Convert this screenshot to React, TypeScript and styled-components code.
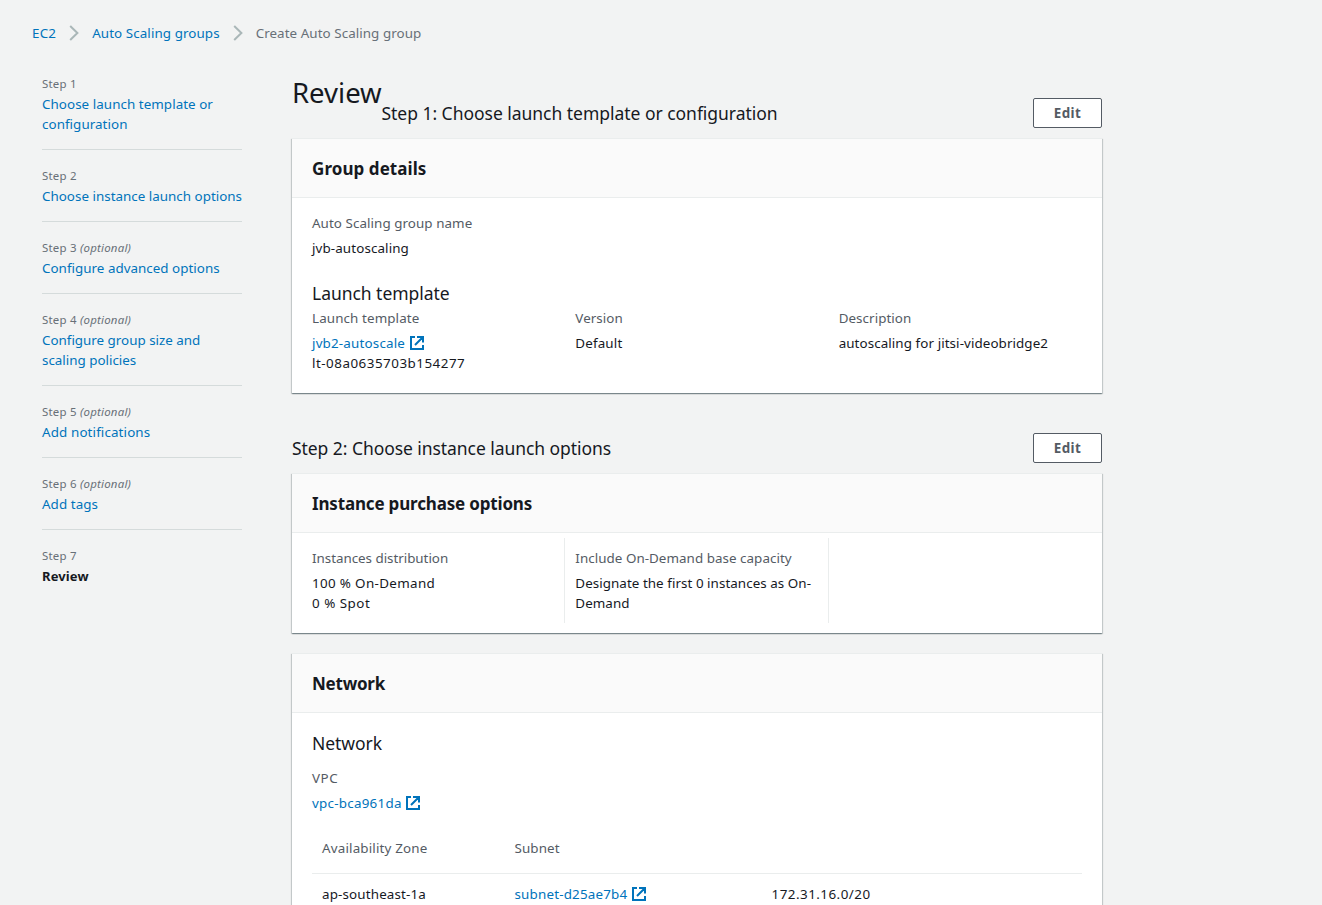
import React from 'react';
import styled, { createGlobalStyle, css } from 'styled-components';

const color = {
  page: '#f2f3f3',
  text: '#16191f',
  label: '#545b64',
  muted: '#687078',
  link: '#0073bb',
  line: '#eaeded',
  divider: '#d5dbdb',
};

const GlobalStyle = createGlobalStyle`
  * { box-sizing: border-box; }
  html, body { margin: 0; height: 100%; overflow: hidden; }
  body {
    background: ${color.page};
    color: ${color.text};
    font: 13.4px/20px "Noto Sans", "Open Sans", sans-serif;
    letter-spacing: 0.06px;
  }
  h1, h2, h3, h4, p { margin: 0; font-weight: 400; }
  a { color: ${color.link}; text-decoration: none; }
`;

type Tracked = { $track?: number };
const tracking = css<Tracked>`
  ${({ $track }) => $track !== undefined && `letter-spacing: ${$track}px;`}
`;

const Page = styled.div`
  height: 905px;
  overflow: hidden;
  padding: 23px 0 0 32px;
`;

const Breadcrumbs = styled.nav`
  display: flex;
  align-items: center;
  height: 20px;
`;

const Crumb = styled.a<Tracked>`
  white-space: nowrap;
  ${tracking}
`;

const CurrentCrumb = styled.span`
  color: ${color.muted};
  white-space: nowrap;
`;

const Chevron = styled.svg`
  width: 10px;
  height: 16px;
  margin: 0 13px;
  fill: none;
  stroke: #aab7b8;
  stroke-width: 2;
`;

const Columns = styled.div`
  display: flex;
  align-items: flex-start;
  padding: 31px 0 0 10px;
`;

const Steps = styled.ol`
  width: 200px;
  margin: 0 50px 0 0;
  padding: 0;
  list-style: none;
`;

const Step = styled.li`
  padding-bottom: 15px;
  margin-bottom: 16px;
  border-bottom: 1px solid ${color.divider};
  white-space: nowrap;

  &:last-child { border-bottom: 0; }
`;

const StepLabel = styled.div`
  color: ${color.muted};
  font-size: 11.45px;
  letter-spacing: 0.22px;
`;

const StepLink = styled.a<Tracked>`
  display: block;
  ${tracking}
`;

const StepCurrent = styled.div`
  font-size: 13px;
  font-weight: 700;
  letter-spacing: 0.13px;
`;

const Main = styled.main`
  width: 810px;
`;

const TitleRow = styled.div`
  display: flex;
  align-items: flex-start;
`;

const Title = styled.h1`
  width: 89.5px;
  font-size: 27.5px;
  line-height: 38px;
  letter-spacing: 0;
`;

const SectionHeader = styled.div<{ $first?: boolean }>`
  display: flex;
  flex: 1;
  align-items: center;
  justify-content: space-between;
  height: 30px;
  margin-top: ${({ $first }) => ($first ? 24 : 40)}px;
`;

const SectionTitle = styled.h2<Tracked>`
  font-size: 17.5px;
  line-height: 22px;
  white-space: nowrap;
  ${tracking}
`;

const EditButton = styled.button`
  width: 69px;
  height: 30px;
  padding: 0;
  border: 1px solid ${color.label};
  border-radius: 2px;
  background: #fff;
  color: ${color.label};
  font: inherit;
  font-size: 13.4px;
  font-weight: 700;
  letter-spacing: 0.45px;
`;

const Panel = styled.section<{ $gap?: number }>`
  margin-top: ${({ $gap = 10 }) => $gap}px;
  border-top: 1px solid ${color.line};
  background: #fff;
  box-shadow:
    0 1px 1px 0 rgba(0, 28, 36, 0.3),
    1px 1px 1px 0 rgba(0, 28, 36, 0.15),
    -1px 1px 1px 0 rgba(0, 28, 36, 0.15);
`;

const PanelHeader = styled.header`
  height: 59px;
  padding: 19px 20px 17px;
  border-bottom: 1px solid ${color.line};
  background: #fafafa;
`;

const PanelTitle = styled.h3<Tracked>`
  font-size: 17px;
  font-weight: 700;
  line-height: 22px;
  ${tracking}
`;

const PanelBody = styled.div`
  padding: 15px 20px 20px;
`;

const SubTitle = styled.h4<Tracked & { $top: number; $bottom: number }>`
  margin: ${({ $top, $bottom }) => `${$top}px 0 ${$bottom}px`};
  font-size: 17.5px;
  line-height: 20px;
  ${tracking}
`;

const Label = styled.div<Tracked>`
  margin-bottom: 5px;
  color: ${color.label};
  ${tracking}
`;

const Value = styled.div<Tracked>`
  ${tracking}
`;

const FieldGrid = styled.div`
  display: grid;
  grid-template-columns: repeat(3, 1fr);
  margin: 0 -10px;
`;

const Field = styled.div`
  padding: 0 10px;
`;

const RuledGrid = styled(FieldGrid)`
  margin: -10px -10px -10px;
`;

const RuledField = styled.div`
  height: 85px;
  padding: 10px 10px 0;

  &:not(:last-child) { border-right: 1px solid ${color.line}; }
`;

const IconLink = styled.a<Tracked>`
  display: inline-flex;
  align-items: center;
  gap: 3.6px;
  height: 20px;
  vertical-align: top;
  ${tracking}
`;

const LinkIcon = styled.svg`
  width: 16px;
  height: 16px;
  fill: none;
  stroke: ${color.link};
  stroke-width: 2;
`;

const SubnetTable = styled.div`
  margin-top: 15px;
`;

const TableRow = styled.div<{ $head?: boolean }>`
  display: grid;
  grid-template-columns: 192.5px 257px 1fr;
  padding: ${({ $head }) => ($head ? '10px 10px 15px' : '10px 10px')};
  border-bottom: 1px solid ${color.line};
  color: ${({ $head }) => ($head ? color.label : color.text)};
`;

const HeadCell = styled.span<Tracked>`
  ${tracking}
`;

function Separator() {
  return (
    <Chevron viewBox="0 0 10 16" aria-hidden="true">
      <path d="M1.2 1L8.4 8L1.2 15" />
    </Chevron>
  );
}

function ExternalLink({ text, track }: { text: string; track: number }) {
  return (
    <IconLink href="#" $track={track}>
      {text}
      <LinkIcon viewBox="0 0 16 16" aria-hidden="true">
        <path d="M6 2H2V14H14V10M8 2H14V7.5M6 10L14 2" />
      </LinkIcon>
    </IconLink>
  );
}

const steps: { lines: string[]; optional?: boolean; track?: number }[] = [
  { lines: ['Choose launch template or', 'configuration'], track: 0.05 },
  { lines: ['Choose instance launch options'], track: 0.01 },
  { lines: ['Configure advanced options'], optional: true, track: 0.02 },
  { lines: ['Configure group size and', 'scaling policies'], optional: true, track: -0.01 },
  { lines: ['Add notifications'], optional: true, track: 0.12 },
  { lines: ['Add tags'], optional: true },
];

export default function App() {
  return (
    <>
      <GlobalStyle />
      <Page>
        <Breadcrumbs>
          <Crumb href="#" $track={0.2}>EC2</Crumb>
          <Separator />
          <Crumb href="#" $track={0.08}>Auto Scaling groups</Crumb>
          <Separator />
          <CurrentCrumb>Create Auto Scaling group</CurrentCrumb>
        </Breadcrumbs>
        <Columns>
          <Steps>
            {steps.map((step, i) => (
              <Step key={i}>
                <StepLabel>
                  Step {i + 1} {step.optional && <em>(optional)</em>}
                </StepLabel>
                {step.lines.map((line) => (
                  <StepLink key={line} href="#" $track={step.track}>{line}</StepLink>
                ))}
              </Step>
            ))}
            <Step>
              <StepLabel>Step 7</StepLabel>
              <StepCurrent>Review</StepCurrent>
            </Step>
          </Steps>
          <Main>
            <TitleRow>
              <Title>Review</Title>
              <SectionHeader $first>
                <SectionTitle $track={-0.03}>Step 1: Choose launch template or configuration</SectionTitle>
                <EditButton>Edit</EditButton>
              </SectionHeader>
            </TitleRow>
            <Panel>
              <PanelHeader><PanelTitle $track={0.07}>Group details</PanelTitle></PanelHeader>
              <PanelBody>
                <Label>Auto Scaling group name</Label>
                <Value $track={0.11}>jvb-autoscaling</Value>
                <SubTitle $top={25} $bottom={5} $track={-0.04}>Launch template</SubTitle>
                <FieldGrid>
                  <Field>
                    <Label $track={0.11}>Launch template</Label>
                    <ExternalLink text="jvb2-autoscale" track={0.18} />
                    <Value $track={0.5}>lt-08a0635703b154277</Value>
                  </Field>
                  <Field>
                    <Label>Version</Label>
                    <Value $track={0.15}>Default</Value>
                  </Field>
                  <Field>
                    <Label>Description</Label>
                    <Value $track={0.08}>autoscaling for jitsi-videobridge2</Value>
                  </Field>
                </FieldGrid>
              </PanelBody>
            </Panel>
            <SectionHeader>
              <SectionTitle $track={-0.06}>Step 2: Choose instance launch options</SectionTitle>
              <EditButton>Edit</EditButton>
            </SectionHeader>
            <Panel>
              <PanelHeader><PanelTitle $track={-0.17}>Instance purchase options</PanelTitle></PanelHeader>
              <PanelBody>
                <RuledGrid>
                  <RuledField>
                    <Label $track={-0.03}>Instances distribution</Label>
                    <Value $track={0.34}>100 % On-Demand</Value>
                    <Value $track={0.5}>0 % Spot</Value>
                  </RuledField>
                  <RuledField>
                    <Label $track={0.04}>Include On-Demand base capacity</Label>
                    <Value $track={0.05}>Designate the first 0 instances as On-Demand</Value>
                  </RuledField>
                  <RuledField />
                </RuledGrid>
              </PanelBody>
            </Panel>
            <Panel $gap={20}>
              <PanelHeader><PanelTitle $track={-0.24}>Network</PanelTitle></PanelHeader>
              <PanelBody>
                <SubTitle $top={5} $bottom={15} $track={-0.06}>Network</SubTitle>
                <Label $track={0.5}>VPC</Label>
                <ExternalLink text="vpc-bca961da" track={0.25} />
                <SubnetTable>
                  <TableRow $head>
                    <HeadCell $track={0.17}>Availability Zone</HeadCell>
                    <HeadCell $track={0.12}>Subnet</HeadCell>
                  </TableRow>
                  <TableRow>
                    <Value $track={0.15}>ap-southeast-1a</Value>
                    <ExternalLink text="subnet-d25ae7b4" track={0.18} />
                    <Value $track={0.48}>172.31.16.0/20</Value>
                  </TableRow>
                </SubnetTable>
              </PanelBody>
            </Panel>
          </Main>
        </Columns>
      </Page>
    </>
  );
}
